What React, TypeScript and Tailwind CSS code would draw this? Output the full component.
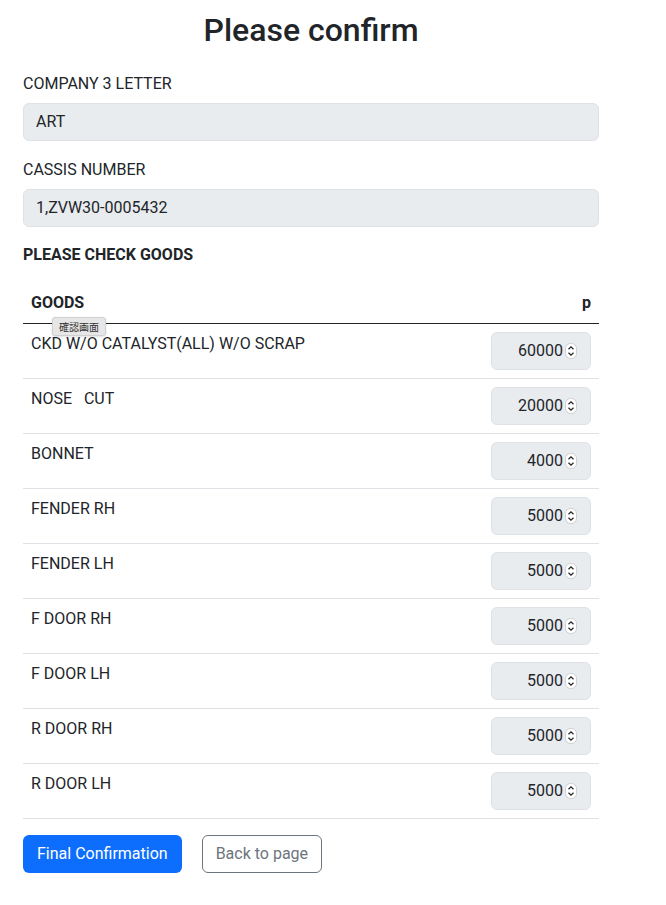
import React from "react";

const rows: [string, string][] = [
  ["CKD W/O CATALYST(ALL) W/O SCRAP", "60000"],
  ["NOSE\u00a0\u00a0\u00a0CUT", "20000"],
  ["BONNET", "4000"],
  ["FENDER RH", "5000"],
  ["FENDER LH", "5000"],
  ["F DOOR RH", "5000"],
  ["F DOOR LH", "5000"],
  ["R DOOR RH", "5000"],
  ["R DOOR LH", "5000"],
];

function Spinner() {
  return (
    <svg width="12" height="16" viewBox="0 0 12 16" className="shrink-0">
      <rect x="0.5" y="0.5" width="11" height="15" rx="5" fill="#ffffff" stroke="#c4c4c4" strokeWidth="0.8" />
      <path d="M3.5 6.2 L6 3.8 L8.5 6.2" fill="none" stroke="#222" strokeWidth="1.2" />
      <path d="M3.5 9.8 L6 12.2 L8.5 9.8" fill="none" stroke="#222" strokeWidth="1.2" />
    </svg>
  );
}

export default function App() {
  return (
    <div
      className="w-[666px] min-h-[905px] bg-white text-[#212529] text-[16px] leading-6"
      style={{ fontFamily: "Roboto, 'Liberation Sans', sans-serif" }}
    >
      <div className="mx-[23px] w-[576px] pt-[11px]">
        <h1 className="text-center text-[32px] leading-[38px] font-medium mb-[22px]">Please confirm</h1>
        <div className="pt-px mb-[7px]">COMPANY 3 LETTER</div>
        <div className="h-[38px] rounded-[6px] border border-[#dee2e6] bg-[#e9ecef] px-3 flex items-center mb-4">ART</div>
        <div className="pt-px mb-[7px]">CASSIS NUMBER</div>
        <div className="h-[38px] rounded-[6px] border border-[#dee2e6] bg-[#e9ecef] px-3 flex items-center mb-4">1,ZVW30-0005432</div>
        <div className="font-bold mb-4">PLEASE CHECK GOODS</div>
        <div className="relative">
          <div className="flex justify-between px-2 py-2 font-bold border-b border-[#212529]">
            <span>GOODS</span>
            <span>p</span>
          </div>
          {rows.map(([name, val]) => (
            <div key={name} className="flex justify-between items-start px-2 py-2 border-b border-[#dee2e6]">
              <span className="whitespace-pre">{name}</span>
              <div className="w-[100px] h-[38px] rounded-[6px] border border-[#dee2e6] bg-[#e9ecef] flex items-center justify-end pr-[13px] gap-[2px]">
                <span>{val}</span>
                <Spinner />
              </div>
            </div>
          ))}
          <div
            className="absolute left-[29px] top-[34px] h-[19px] px-[6px] flex items-center rounded-[3px] bg-[#e6e6e6] border border-[#d0d0d0] text-[10px] text-[#333] shadow-sm"
            style={{ fontFamily: "'Noto Sans CJK JP', sans-serif" }}
          >
            確認画面
          </div>
        </div>
        <div className="mt-4 flex gap-5">
          <button className="h-[38px] px-[14px] rounded-[6px] bg-[#0d6efd] text-white">Final Confirmation</button>
          <button className="h-[38px] px-[13px] rounded-[6px] border border-[#6c757d] text-[#6c757d] bg-white">Back to page</button>
        </div>
      </div>
    </div>
  );
}
